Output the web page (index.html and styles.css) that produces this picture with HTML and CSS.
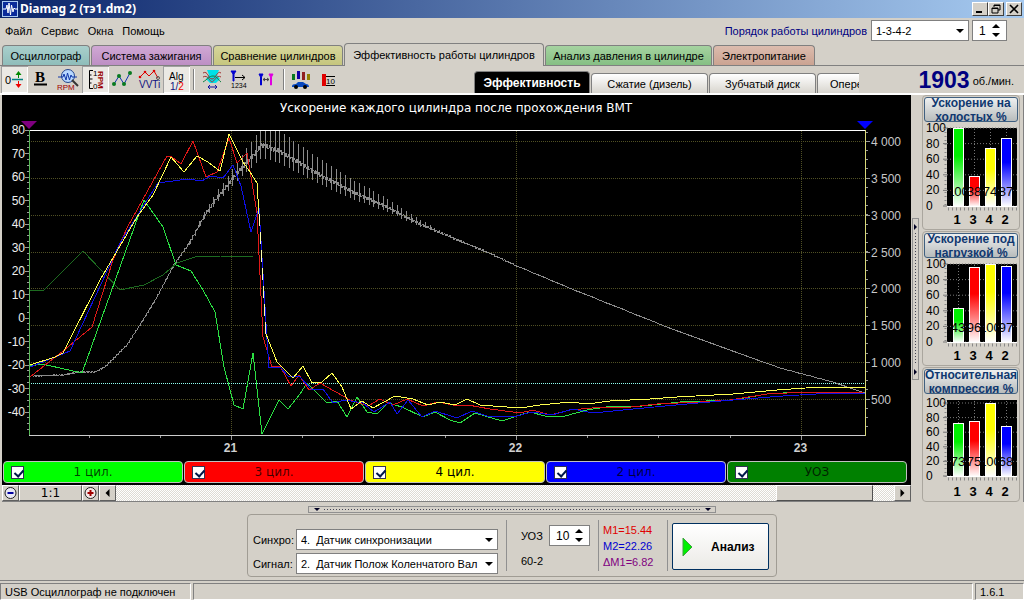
FILE: index.html
```html
<!DOCTYPE html>
<html lang="ru">
<head>
<meta charset="utf-8">
<title>Diamag 2 (тэ1.dm2)</title>
<link rel="stylesheet" href="styles.css">
</head>
<body>
<header class="titlebar">
  <svg class="app-icon" viewBox="0 0 16 16" aria-hidden="true"><rect x=".5" y=".5" width="15" height="15" fill="#0a2a9a" stroke="#a8c8f0"/><path d="M1 8h3l1-4 1 8 1-10 1.500 12 1-10 1.500 7 1-4 1 1h3" fill="none" stroke="#fff"/></svg>
  <h1 class="title">Diamag 2 (тэ1.dm2)</h1>
  <div class="window-buttons">
    <button class="win-btn" aria-label="Свернуть"><svg viewBox="0 0 12 10"><path d="M2 8h6" stroke="#000" stroke-width="2"/></svg></button>
    <button class="win-btn" aria-label="Восстановить"><svg viewBox="0 0 12 10"><path d="M4 3V1h6v5H8M4 1.500h6M2 4h6v5H2zM2 4.500h6" fill="none" stroke="#000"/></svg></button>
    <button class="win-btn win-close" aria-label="Закрыть"><svg viewBox="0 0 12 10"><path d="M2 1l8 8M10 1L2 9" stroke="#000" stroke-width="1.600"/></svg></button>
  </div>
</header>

<div class="menu-row">
  <nav class="menu">
    <button>Файл</button><button>Сервис</button><button>Окна</button><button>Помощь</button>
  </nav>
  <label class="order-label" for="order">Порядок работы цилиндров</label>
  <span class="select-box order-box"><select id="order"><option>1-3-4-2</option></select></span>
  <span class="spin-box order-spin"><input type="text" value="1" aria-label="Номер цилиндра"></span>
</div>

<nav class="tabs">
  <button class="tab tab-scope">Осциллограф</button>
  <button class="tab tab-ignition">Система зажигания</button>
  <button class="tab tab-compare">Сравнение цилиндров</button>
  <button class="tab tab-active">Эффективность работы цилиндров</button>
  <button class="tab tab-pressure">Анализ давления в цилиндре</button>
  <button class="tab tab-power">Электропитание</button>
</nav>

<div class="tool-row">
  <div class="toolbar">
    <button class="tool pressed" aria-label="Ноль"><svg viewBox="0 0 27 27"><text x="4" y="18" class="ic-text" font-size="11">0</text><path d="M11 13.500h11" stroke="#008080" stroke-width="1.500"/><path d="M17.500 6v6" stroke="#080"/><path d="M14.500 9l3-4 3 4z" fill="#080"/><path d="M17.500 15v6" stroke="#e00"/><path d="M14.500 18l3 4 3-4z" fill="#e00"/></svg></button>
    <button class="tool" aria-label="Жирный"><svg viewBox="0 0 27 27"><text x="7" y="16" font-family="Liberation Serif, serif" font-weight="bold" font-size="15">B</text><path d="M6 18.500h13" stroke="#000" stroke-width="2"/></svg></button>
    <button class="tool" aria-label="Обороты"><svg viewBox="0 0 27 27"><circle cx="13" cy="10" r="6.500" fill="#b8d8ff" stroke="#24458e"/><path d="M3 11h5l1-3 2 6 1.500-7 2 7 1.500-5 1 2h5" fill="none" stroke="#1238a8"/><path d="M17 14l6 6" stroke="#333" stroke-width="2"/><text x="2" y="24" class="ic-text" fill="#a00000" font-size="8">RPM</text></svg></button>
    <button class="tool pressed" aria-label="Шкала оборотов"><svg viewBox="0 0 27 27"><path d="M11 4.500H7.500v18H11M7.500 9h2M7.500 13h3M7.500 17h2" fill="none" stroke="#000"/><text x="11" y="10" class="ic-text" font-size="8">1</text><text x="11" y="23" class="ic-text" font-size="8">0</text><text transform="translate(16 5) rotate(90)" class="ic-text" fill="#900" font-size="8" font-weight="bold">RPM</text></svg></button>
    <button class="tool" aria-label="Точки"><svg viewBox="0 0 27 27"><path d="M5 18L10 10l5 8 6-11" fill="none" stroke="#1030b0"/><g fill="#087a20"><circle cx="5" cy="18" r="2"/><circle cx="10" cy="10" r="2"/><circle cx="15" cy="18" r="2"/><circle cx="21" cy="7" r="2"/></g></svg></button>
    <button class="tool" aria-label="VVTi"><svg viewBox="0 0 27 27"><path d="M4 11l5-5 4 4 5-5 4 7" fill="none" stroke="#d00"/><g fill="#d00"><circle cx="4" cy="11" r="1.300"/><circle cx="9" cy="6" r="1.300"/><circle cx="18" cy="5" r="1.300"/></g><circle cx="22" cy="12" r="1.500" fill="none" stroke="#555"/><text x="3" y="22" class="ic-text" fill="#101080" font-size="10">VVTi</text></svg></button>
    <button class="tool pressed" aria-label="Алгоритм"><svg viewBox="0 0 27 27"><text x="6" y="14" class="ic-text" font-size="10">Alg</text><text x="7" y="24" class="ic-text" fill="#101080" font-size="10">1/<tspan fill="#e00">2</tspan></text></svg></button>
    <span class="tool-sep"></span>
    <button class="tool" aria-label="Фаза"><svg viewBox="0 0 27 27"><path d="M8 4h12l-2 5 3 4-4 4h-6l-4-4 3-4z" fill="#00e0e8"/><path d="M4 7c5-3 5 6 9 6s5-9 9-6M4 11c5-3 7 5 9 5s5-8 9-5" fill="none" stroke="#a03030"/><path d="M4 16c5-3 6-6 10-6s5 4 8 6" fill="none" stroke="#108040"/><path d="M9 21h9M11 19l-2 2 2 2M16 19l2 2-2 2" fill="none" stroke="#1010a0"/></svg></button>
    <button class="tool" aria-label="Нумерация"><svg viewBox="0 0 27 27"><path d="M5 5h5L8 8v7H7V8z" fill="#0000d0" stroke="#0000d0"/><path d="M9 11.500h10M16 9l3 2.500-3 2.500" fill="none" stroke="#000"/><text x="5" y="22" class="ic-text" font-size="7">1234</text></svg></button>
    <button class="tool" aria-label="Маркеры"><svg viewBox="0 0 27 27"><path d="M6 8h4L8.500 11v8h-1v-8z" fill="#0000d0" stroke="#0000d0"/><path d="M16 8h4l-1.500 3v8h-1v-8z" fill="#e000e0" stroke="#e000e0"/><path d="M10 13.500h6M12 12l-2 1.500 2 1.500M14 12l2 1.500-2 1.500" fill="none" stroke="#444"/></svg></button>
    <span class="tool-sep"></span>
    <button class="tool" aria-label="Автомобиль"><svg viewBox="0 0 27 27"><path d="M3 8h3v6H3z" fill="#087a20"/><path d="M8 5h3v8H8z" fill="#10a"/><path d="M13 6h3v8h-3z" fill="#902020"/><path d="M18 8h3v6h-3z" fill="#908000"/><path d="M3 20q0-2 4-2l2-2h5l3 2q3 0 3 3H3z" fill="#0848c0"/><circle cx="7" cy="21" r="2" fill="#000"/><circle cx="16" cy="21" r="2" fill="#000"/></svg></button>
    <button class="tool" aria-label="Порог 10"><svg viewBox="0 0 27 27"><path d="M6 8h4v12H6z" fill="#e00000"/><path d="M10 10.500h9M10 19.500h9" stroke="#000"/><text x="10" y="18" class="ic-text" font-size="8">10</text></svg></button>
  </div>
  <nav class="subtabs">
    <button class="subtab subtab-active">Эффективность</button>
    <button class="subtab">Сжатие (дизель)</button>
    <button class="subtab subtab-disk">Зубчатый диск</button>
    <button class="subtab subtab-cut">Опере</button>
  </nav>
  <div class="speed"><b>1903</b><span>об./мин.</span></div>
</div>

<main class="workspace">
  <section class="chart-pane">
    <svg class="chart" viewBox="2 95 909 366" role="img" aria-label="Ускорение каждого цилиндра">
      <text x="456" y="112" class="chart-title">Ускорение каждого цилиндра после прохождения ВМТ</text>
      <g id="grid"></g>
      <path d="M29 383.500H865" class="threshold"/>
      <path id="rpm" class="trace" stroke="#8c8c8c"/>
      <path class="trace" stroke="#1d6b20" d="M30 291L44 290 83 251 120 290 144 285 163 275 177 263 195 257 207 256 220 256 253 257"/>
      <path class="trace" stroke="#2be043" d="M30 366L42 364 60 368 82 373 144 200 163 227 176 265 191 271 203 290 215 312 224 367 234 405 243 409 253 353 262 434 279 400 288 409 300 394 307 383 327 403 337 401 347 417 357 397 367 412 377 414 388 403 402 407 423 417 435 412 450 420 460 423 475 413 502 421 517 416 530 412 545 416 565 416 587 410 613 406 633 407 680 402 733 400 767 394 800 392 863 392"/>
      <path class="trace" stroke="#e01818" d="M30 377L63 351 92 327 113 260 127 228 167 156 172 157 181 164 193 141 206 177 217 172 229 138 237 163 247 153 257 213 263 337 272 367 280 366 291 386 299 375 309 390 320 383 350 400 368 406 380 399 393 405 407 399 423 406 438 402 453 405 468 405 490 409 520 413 533 410 550 415 570 410 603 407 623 408 657 404 700 402 730 400 767 394 807 392 863 392"/>
      <path class="trace" stroke="#1010e8" d="M30 367L70 351 120 243 158 183 188 179 202 181 210 176 223 178 233 165 241 186 251 232 259 208 267 340 269 368 280 367 288 376 300 377 312 390 323 389 333 403 345 400 363 403 374 412 390 402 397 414 408 400 422 417 435 411 457 418 472 411 487 416 513 417 532 412 552 415 573 409 593 413 633 409 687 404 733 400 783 396 833 393 865 393"/>
      <path class="trace" stroke="#ffff50" d="M30 365L55 357 63 353 100 280 137 217 153 195 171 157 184 172 197 156 208 162 220 171 229 134 243 162 250 172 257 183 259 214"/>
      <path class="trace" stroke="#ffffb0" stroke-dasharray="12 6" d="M259 214L266 334"/>
      <path class="trace" stroke="#ffff50" d="M266 334L277 362 293 378 303 366 312 383 322 382 332 373 342 387 351 409 362 401 373 408 395 396 413 399 428 405 440 402 455 405 467 399 480 405 520 408 540 405 570 402 587 404 610 401 650 399 677 397 733 394 777 390 820 387 865 387"/>
      <path d="M29 130.500H866" stroke="#fff"/>
      <path d="M29.500 130V436" stroke="#58b858"/>
      <path d="M29 435.500H866" stroke="#ccc"/>
      <path d="M865.500 130V436" stroke="#d8d878"/>
      <path d="M21 121h16l-8 8z" fill="#800080"/>
      <path d="M857 121h16l-8 8z" fill="#0000ff"/>
    </svg>
    <div class="legend">
      <label class="channel ch-green"><input type="checkbox" checked><span>1 цил.</span></label>
      <label class="channel ch-red"><input type="checkbox" checked><span>3 цил.</span></label>
      <label class="channel ch-yellow"><input type="checkbox" checked><span>4 цил.</span></label>
      <label class="channel ch-blue"><input type="checkbox" checked><span>2 цил.</span></label>
      <label class="channel ch-dark"><input type="checkbox" checked><span>УОЗ</span></label>
    </div>
    <div class="scroll-row">
      <button class="sc-btn" aria-label="Уменьшить"><svg viewBox="0 0 14 14"><circle cx="7" cy="7" r="5.500" fill="#e8e8f4" stroke="#222"/><path d="M4 7h6" stroke="#0000a0" stroke-width="2"/></svg></button>
      <button class="sc-btn sc-scale">1:1</button>
      <button class="sc-btn" aria-label="Увеличить"><svg viewBox="0 0 14 14"><circle cx="7" cy="7" r="5.500" fill="#f4e8e8" stroke="#222"/><path d="M4 7h6M7 4v6" stroke="#a00000" stroke-width="2"/></svg></button>
      <button class="sc-btn" aria-label="Влево"><svg viewBox="0 0 14 14"><path d="M9 3v8L5 7z"/></svg></button>
      <div class="sc-track"><div class="sc-thumb"></div></div>
      <button class="sc-btn" aria-label="Вправо"><svg viewBox="0 0 14 14"><path d="M5 3v8l4-4z"/></svg></button>
    </div>
  </section>
  <div class="v-splitter"><div class="v-grip"></div></div>
  <aside class="gauges">
    <section class="gauge"><button class="gauge-title">Ускорение на холостых %</button><svg class="mini" viewBox="923 121 96 106" data-values="100,38,74,87"></svg></section>
    <section class="gauge"><button class="gauge-title">Ускорение под нагрузкой %</button><svg class="mini" viewBox="923 121 96 106" data-values="43,96,100,97"></svg></section>
    <section class="gauge"><button class="gauge-title">Относительная компрессия %</button><svg class="mini" viewBox="923 121 96 106" data-values="73,75,100,68" data-headroom="3" data-base="203"></svg></section>
  </aside>
</main>

<section class="bottom">
  <div class="h-grip"></div>
  <div class="controls">
    <div class="sources">
      <label for="sync">Синхро:</label><span class="select-box"><select id="sync"><option>4.&nbsp; Датчик синхронизации</option></select></span>
      <label for="signal">Сигнал:</label><span class="select-box"><select id="signal"><option>2.&nbsp; Датчик Полож Коленчатого Вал</option></select></span>
    </div>
    <div class="advance">
      <label for="uoz">УОЗ</label><span class="spin-box"><input id="uoz" type="text" value="10"></span>
      <span>60-2</span>
    </div>
    <div class="markers"><span class="m1">M1=15.44</span><span class="m2">M2=22.26</span><span class="dm">ΔM1=6.82</span></div>
    <div class="run"><button class="analyse"><svg viewBox="0 0 11 20"><path d="M1 1l9 9-9 9z" fill="#00f000" stroke="#40a040"/></svg><span>Анализ</span></button></div>
  </div>
</section>

<footer class="status"><span class="st-main">USB Осциллограф не подключен</span><span class="st-mid"></span><span class="st-ver">1.6.1</span></footer>
<script src="chart.js"></script>
</body>
</html>
```

FILE: styles.css
```css
* { box-sizing: border-box; }
body {
  margin: 0;
  min-height: 100vh;
  display: flex;
  flex-direction: column;
  background: #d4d0c8;
  color: #000;
  font: 11px/14px "Liberation Sans", Arial, sans-serif;
  overflow-x: hidden;
}
button, select, input { font: inherit; color: inherit; margin: 0; padding: 0; border: 0; border-radius: 0; background: none; }
svg { display: block; }

/* Title bar */
.titlebar { display: flex; align-items: center; height: 18px; padding: 0 2px; gap: 2px; background: linear-gradient(90deg, #0a246a, #a6caf0); }
.app-icon { width: 16px; height: 16px; }
.title { margin: 0; flex: 1; color: #fff; font: bold 12px/18px "Noto Sans", sans-serif; }
.window-buttons { display: flex; }
.win-btn { width: 16px; height: 14px; padding: 1px; background: #d4d0c8; border: 1px solid; border-color: #fff #404040 #404040 #fff; }
.win-btn svg { width: 12px; height: 10px; }
.win-close { margin-left: 2px; }

/* Menu */
.menu-row { display: flex; align-items: center; height: 25px; padding-right: 17px; }
.menu { display: flex; flex: 1; gap: 9px; padding-left: 5px; }
.order-label { color: #000080; margin-right: 4px; }
.select-box, .spin-box { position: relative; display: block; height: 21px; background: #fff; border: 1px solid #808080; }
.select-box select { display: block; width: 100%; height: 100%; padding: 0 18px 0 4px; appearance: none; }
.select-box::after { content: ""; position: absolute; right: 4px; top: 8px; border: 4px solid transparent; border-top-color: #000; border-bottom: 0; pointer-events: none; }
.spin-box input { width: 100%; height: 100%; padding: 0 18px 0 6px; font-size: 12px; }
.spin-box::before, .spin-box::after { content: ""; position: absolute; right: 6px; border: 4px solid transparent; pointer-events: none; }
.spin-box::before { top: 3px; border-bottom-color: #000; border-top: 0; }
.spin-box::after { bottom: 3px; border-top-color: #000; border-bottom: 0; }
.order-box { width: 98px; margin-right: 3px; }
.order-box .order-box select { padding-left: 2px; }
.order-spin { width: 35px; }

/* Main tabs */
.tabs { display: flex; align-items: flex-end; height: 23px; padding: 0 2px; gap: 1px; border-bottom: 1px solid #808080; }
.tab { height: 20px; border: 1px solid #808080; border-bottom: 0; border-radius: 4px 4px 0 0; white-space: nowrap; }
.tab-scope { width: 88px; background: linear-gradient(#a9cfcc, #8fbdba); }
.tab-ignition { width: 121px; background: linear-gradient(#d0a8d4, #bd8fc4); }
.tab-compare { width: 130px; background: linear-gradient(#d6d69c, #c6c67e); }
.tab-active { width: 200px; height: 23px; margin-bottom: -1px; background: #d4d0c8; }
.tab-pressure { width: 167px; background: linear-gradient(#a5d3a0, #86bf84); }
.tab-power { width: 102px; background: linear-gradient(#dcbcae, #cba392); }

/* Tool row */
.tool-row { display: flex; align-items: stretch; height: 29px; padding-left: 1px; border-bottom: 2px solid #fff; }
.toolbar { display: flex; flex: 1; }
.tool { width: 27px; height: 27px; }
.tool svg { width: 27px; height: 27px; }
.pressed { background: #ebe9e4; box-shadow: inset 1px 1px #a0a0a0, inset -1px -1px #fff; }
.ic-text { font-family: "Liberation Sans", Arial, sans-serif; }
.tool-sep { width: 2px; margin: 3px 4px 3px 3px; border-left: 1px solid #808080; border-right: 1px solid #fff; }
.subtabs { display: flex; align-items: flex-end; gap: 1px; width: 385px; overflow: hidden; }
.subtab { flex: none; width: 117px; height: 20px; border: 1px solid #808080; border-bottom: 0; border-radius: 4px 4px 0 0; background: linear-gradient(#fff, #d8d5ce); }
.subtab-active { width: 116px; height: 22px; background: #000; color: #fff; font-weight: bold; font-size: 12px; }
.subtab-disk { width: 107px; }
.subtab-cut { width: 42px; padding-left: 12px; text-align: left; border-right: 0; border-top-right-radius: 0; }
.speed { display: flex; align-items: center; justify-content: flex-end; gap: 3px; width: 165px; padding-right: 10px; }
.speed b { color: #000080; font-size: 23px; line-height: 26px; }
.speed span { padding-top: 3px; }

/* Workspace */
.workspace { display: flex; padding-left: 2px; }
.chart-pane { flex: 1; min-width: 0; background: #000; }
.chart { width: 100%; height: auto; font: 12px "Liberation Sans", Arial, sans-serif; }
.chart-title { fill: #fff; font: 12px "DejaVu Sans", Verdana, sans-serif; text-anchor: middle; }
.trace { fill: none; stroke-width: 1; shape-rendering: crispEdges; }
.threshold { stroke: #90fff0; stroke-dasharray: 1 1; }
.grid-line { stroke: #505024; stroke-dasharray: 1 1; }
.tick { stroke: #999; shape-rendering: crispEdges; }
.lab-left { fill: #eee; text-anchor: end; }
.lab-right { fill: #c8c8c8; }
.lab-bottom { fill: #d0d0d0; font-weight: bold; text-anchor: middle; }

.legend { display: flex; gap: 1px; padding: 0 4px 2px 1px; }
.channel { position: relative; flex: 1; display: flex; align-items: center; justify-content: center; height: 22px; border: 1px solid #c0c0c0; border-radius: 4px; font: 12px "DejaVu Sans", Verdana, sans-serif; color: rgba(0, 0, 0, .75); }
.channel input { position: absolute; left: 7px; top: 4px; width: 13px; height: 13px; appearance: none; background: #fff; border: 1px solid #335; }
.channel input:checked::after { content: ""; position: absolute; left: 4px; top: 1px; width: 4px; height: 7px; border: solid #00184a; border-width: 0 2px 2px 0; transform: rotate(42deg); }
.ch-green { background: #00ff00; }
.ch-red { background: #ff0000; }
.ch-yellow { background: #ffff00; color: #000; }
.ch-blue { background: #0000ff; }
.ch-dark { background: #008000; }

.scroll-row { display: flex; height: 17px; background: #d4d0c8; border-bottom: 1px solid #808080; }
.sc-btn { width: 17px; padding: 0; background: #d4d0c8; border: 1px solid; border-color: #fff #606060 #606060 #fff; }
.sc-btn svg { width: 15px; height: 14px; }
.sc-scale { width: 63px; font: 12px/14px "DejaVu Sans", Verdana, sans-serif; }
.sc-track { flex: 1; display: flex; justify-content: flex-end; padding-right: 21px; background: repeating-conic-gradient(#fff 0 25%, #dedbd4 0 50%) 0 0 / 2px 2px; }
.sc-thumb { width: 97px; background: #d4d0c8; border: 1px solid; border-color: #fff #505050 #505050 #fff; }

.v-splitter { width: 9px; display: flex; align-items: center; }
.v-grip, .h-grip { position: relative; border: 1px solid #909090; }
.v-grip { width: 7px; height: 162px; margin-left: 1px; background: repeating-linear-gradient(#445 0 1px, transparent 1px 3px) center / 1px 132px no-repeat; }
.v-grip::before, .v-grip::after { content: ""; position: absolute; left: 1px; border: 3px solid transparent; border-left-color: #002; border-right: 0; }
.v-grip::before { top: 5px; }
.v-grip::after { bottom: 4px; }

.gauges { width: 104px; padding: 0 3px 0 2px; display: flex; flex-direction: column; gap: 1px; border-right: 1px solid #808080; }
.gauge { height: 135px; padding-top: 1px; border: 1px solid #aaa69e; border-radius: 4px; }
.gauge-title { display: flex; align-items: center; justify-content: center; width: 94px; height: 25px; margin: 0 auto; border: 1px solid #406080; border-radius: 3px; overflow: hidden; background: linear-gradient(#eef0f0, #b8bcbc); color: #103870; font: bold 12px/14px "Liberation Sans", Arial, sans-serif; text-align: center; }
.mini { width: 100%; height: 106px; font: 12px "Liberation Sans", Arial, sans-serif; }
.mini-value { text-anchor: middle; font-size: 13px; }
.mini-name { text-anchor: middle; font-size: 13px; font-weight: bold; }

/* Bottom panel */
.bottom { flex: 1; display: flex; flex-direction: column; align-items: center; padding-top: 4px; border-bottom: 1px solid #808080; }
.h-grip { width: 408px; height: 7px; background: repeating-linear-gradient(90deg, #445 0 1px, transparent 1px 3px) center / 376px 1px no-repeat; }
.h-grip::before, .h-grip::after { content: ""; position: absolute; top: 1px; border: 3px solid transparent; border-top-color: #002; border-bottom: 0; }
.h-grip::before { left: 5px; }
.h-grip::after { right: 4px; }
.controls { display: flex; align-items: stretch; height: 63px; margin-top: 1px; border: 1px solid #a09c94; border-radius: 4px; padding: 5px 7px 5px 5px; }
.sources { display: grid; grid-template-columns: 43px 202px; row-gap: 3px; align-content: end; align-items: center; padding-right: 8px; margin-bottom: -3px; }
.advance { display: grid; grid-template-columns: 28px 41px; row-gap: 8px; align-content: start; align-items: center; padding: 5px 8px 0 14px; border-left: 1px solid #909090; }
.markers { display: flex; flex-direction: column; justify-content: center; width: 69px; padding-left: 4px; border-left: 1px solid #909090; line-height: 16px; }
.m1 { color: #e00000; }
.m2 { color: #0000d0; }
.dm { color: #800080; }
.run { padding: 3px 0 0 4px; border-left: 1px solid #909090; }
.analyse { display: flex; align-items: center; gap: 18px; width: 97px; height: 47px; padding-left: 9px; border: 1px solid #003060; border-radius: 2px; background: linear-gradient(#fff, #ebeae6); font-weight: bold; font-size: 12px; }
.analyse svg { width: 11px; height: 20px; }

/* Status bar */
.status { display: flex; gap: 2px; height: 19px; padding-top: 2px; }
.status span { border: 1px solid; border-color: #808080 #fff #fff #808080; padding: 0 4px; line-height: 16px; }
.status .st-main { width: 191px; white-space: nowrap; }
.st-mid { flex: 1; }
.st-ver { width: 49px; }
```

FILE: chart.js
```js
const NS = "http://www.w3.org/2000/svg";

function add(parent, name, attrs, text) {
  const el = document.createElementNS(NS, name);
  for (const key in attrs) el.setAttribute(key, attrs[key]);
  if (text !== undefined) el.textContent = text;
  parent.appendChild(el);
}

/* Axes: acceleration on the left, engine speed on the right, seconds below. */
const grid = document.getElementById("grid");
const leftStep = 23.5, rightStep = 36.85;
for (let i = 0; i <= 12; i++) {
  const y = 130 + i * leftStep;
  add(grid, "text", { x: 25, y: y + 4, class: "lab-left" }, String(80 - i * 10));
  add(grid, "path", { d: `M25 ${y}H29`, class: "tick" });
}
for (let y = 130; y < 435; y += leftStep / 4) add(grid, "path", { d: `M27 ${y}H29`, class: "tick" });
for (let i = 0; i < 8; i++) {
  const y = Math.round(141 + i * rightStep) + 0.5;
  const v = 4000 - i * 500;
  const label = v >= 1000 ? `${Math.floor(v / 1000)} ${String(v % 1000).padStart(3, "0")}` : String(v);
  add(grid, "path", { d: `M29 ${y}H865`, class: "grid-line" });
  add(grid, "path", { d: `M866 ${y}H870`, class: "tick" });
  add(grid, "text", { x: 871, y: y + 4, class: "lab-right" }, label);
}
for (let y = 132; y < 435; y += rightStep / 4) add(grid, "path", { d: `M866 ${y}H868`, class: "tick" });
[[231.5, 21], [516.5, 22], [801.5, 23]].forEach(([x, s]) => {
  add(grid, "path", { d: `M${x} 131V435`, class: "grid-line" });
  add(grid, "path", { d: `M${x} 436V440`, class: "tick" });
  add(grid, "text", { x: x - 1, y: 452, class: "lab-bottom" }, s);
});
[89, 160, 302, 373, 445, 587, 658, 730].forEach(x => add(grid, "path", { d: `M${x}.5 436V438`, class: "tick" }));

/* Engine speed curve with tooth ripple around the peak. */
const rpm = [[33, 376], [63, 375], [80, 372], [95, 372], [105, 367], [127, 345], [145, 317], [157, 297], [174, 265],
  [190, 242], [205, 215], [217, 198], [230, 182], [240, 170], [252, 157], [262, 145], [277, 150], [300, 163],
  [320, 175], [353, 192], [387, 207], [420, 224], [453, 238], [487, 252], [517, 266], [567, 287], [617, 307],
  [667, 327], [733, 351], [780, 368], [833, 382], [865, 393]];
function rpmAt(x) {
  let i = 1;
  while (i < rpm.length - 1 && rpm[i][0] < x) i++;
  const [x0, y0] = rpm[i - 1], [x1, y1] = rpm[i];
  return y0 + (y1 - y0) * (x - x0) / (x1 - x0);
}
let d = "M33 376";
for (let x = 34; x <= 865; x++) {
  const ripple = x < 262 ? Math.max(0, (x - 160) / 100) : Math.max(0, 1 - (x - 262) / 240);
  const y = rpmAt(x);
  d += `L${x} ${(y + Math.sin(x * 2.3) * (0.7 + 2 * ripple) * (x > 520 ? 0.4 : 1)).toFixed(1)}`;
}
for (let x = 190; x < 440; x += 4.7) {
  const size = x < 262 ? 3 + 17 * Math.pow((x - 190) / 72, 1.5) : 22 * Math.pow(1 - (x - 262) / 190, 0.9);
  const y = rpmAt(x);
  d += `M${Math.round(x)}.5 ${Math.max(131, y - size).toFixed(1)}V${(y + size * 0.6).toFixed(1)}`;
}
document.getElementById("rpm").setAttribute("d", d);

/* Small bar charts: one bar per cylinder in firing order. */
const colours = ["#00ee00", "#ff0000", "#ffff00", "#0000ff"];
document.querySelectorAll(".mini").forEach((svg, n) => {
  const values = svg.dataset.values.split(",").map(Number);
  const top = 127 + Number(svg.dataset.headroom || 0), base = Number(svg.dataset.base || 205);
  const defs = document.createElementNS(NS, "defs");
  svg.appendChild(defs);
  add(svg, "rect", { x: 947, y: 127, width: 70, height: base - 127 });
  for (let v = 0; v <= 100; v += 20) {
    const y = base - (base - top) * v / 100;
    add(svg, "path", { d: `M947 ${y}H1017`, stroke: "#777", "stroke-dasharray": "1 2" });
    add(svg, "path", { d: `M943 ${y}H947`, stroke: "#777" });
    add(svg, "text", { x: 926, y: y + 4 }, v);
  }
  add(svg, "path", { d: `M945.500 127V${base + 1}`, stroke: "#888", "stroke-width": 2, "stroke-dasharray": "1 3" });
  add(svg, "path", { d: `M948 ${base + 3}H1017`, stroke: "#888", "stroke-width": 3, "stroke-dasharray": "1 3" });
  values.forEach((v, i) => {
    const x = 953 + i * 16, h = Math.round((base - top) * v / 100);
    const id = `bar-${n}-${i}`;
    const grad = document.createElementNS(NS, "linearGradient");
    grad.id = id;
    for (const [k, w] of [["x1", 0], ["x2", 0], ["y1", 0], ["y2", 1]]) grad.setAttribute(k, w);
    add(grad, "stop", { offset: 0.35, "stop-color": colours[i] });
    add(grad, "stop", { offset: 1, "stop-color": "#fff" });
    defs.appendChild(grad);
    add(svg, "path", { d: `M${x + 5.5} 128V${base}`, stroke: "#777", "stroke-dasharray": "1 2" });
    add(svg, "rect", { x: x + 0.5, y: base - h + 0.5, width: 10, height: h, fill: `url(#${id})`, stroke: "#fff" });
    add(svg, "text", { x: x + 5, y: base - 10, class: "mini-value" }, v);
    add(svg, "text", { x: x + 4, y: 223, class: "mini-name" }, [1, 3, 4, 2][i]);
  });
  add(svg, "path", { d: `M947 ${base}.5H1017`, stroke: "#fff" });
});
```
